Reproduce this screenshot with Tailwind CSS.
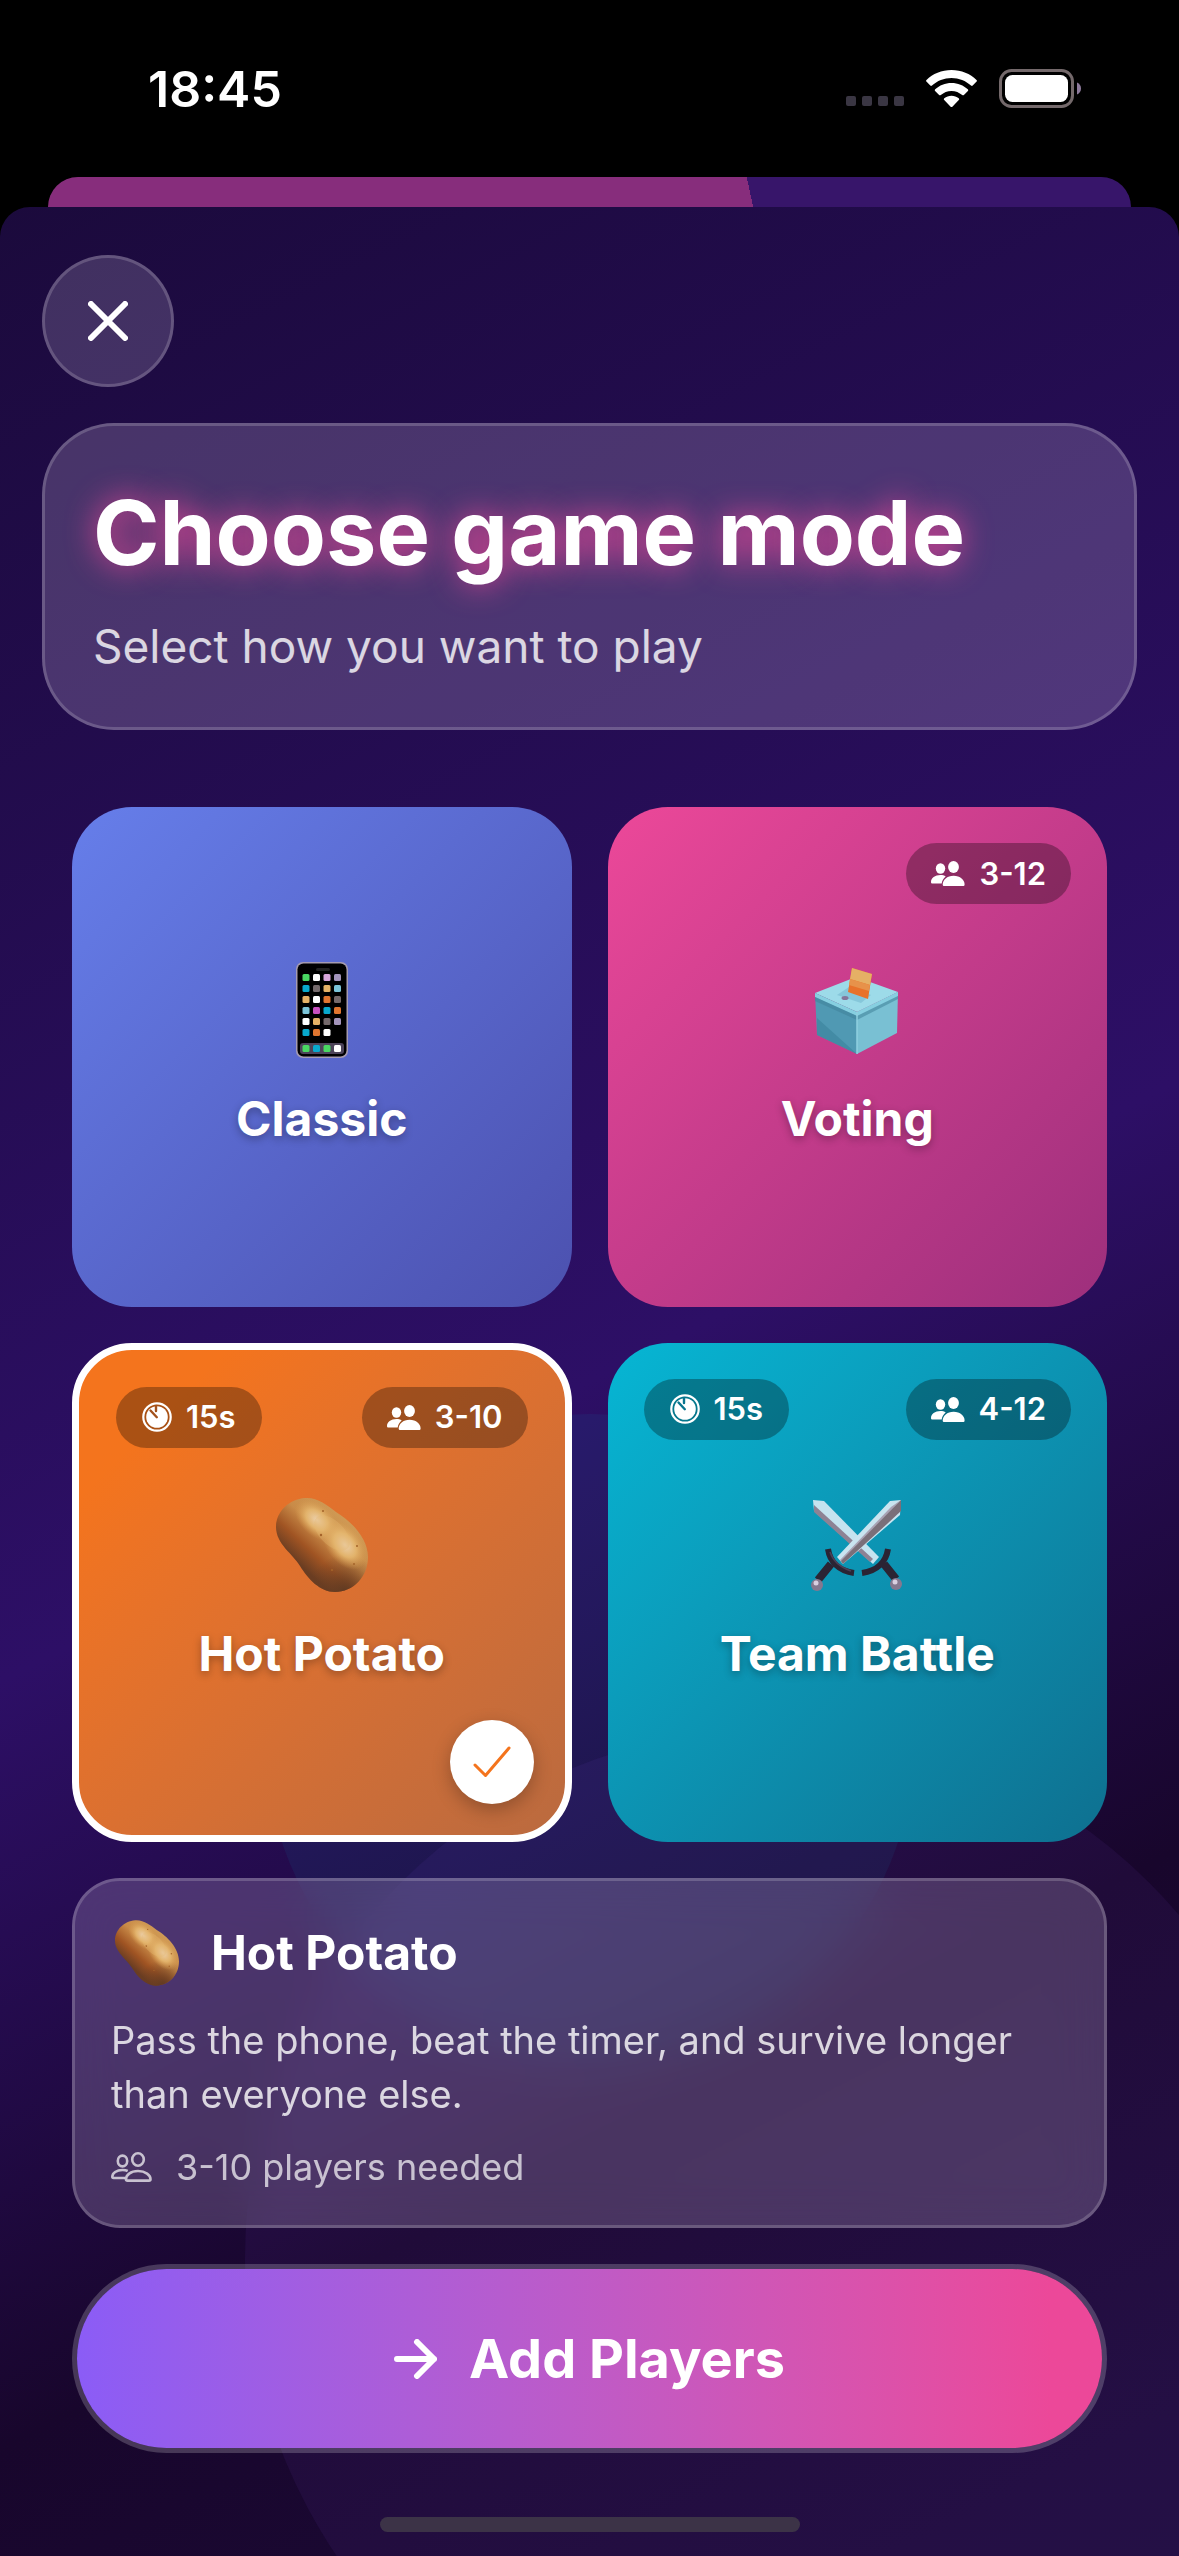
<!DOCTYPE html>
<html lang="en">
<head>
  <meta charset="UTF-8" />
  <meta name="viewport" content="width=device-width, initial-scale=1.0" />
  <title>Choose game mode</title>
  <script src="https://cdn.jsdelivr.net/npm/@tailwindcss/browser@4"></script>
</head>
<body class="flex min-h-screen flex-col bg-black font-['Inter','Liberation_Sans',sans-serif] text-white">

  <!-- Shared icons -->
  <svg class="absolute size-0" aria-hidden="true">
    <defs>
      <linearGradient id="skin" x1="0.75" y1="0.2" x2="0.25" y2="0.75">
        <stop offset="0" stop-color="#cf9a55" />
        <stop offset="0.4" stop-color="#c98b48" />
        <stop offset="0.7" stop-color="#a05423" />
        <stop offset="0.95" stop-color="#6a3d22" />
      </linearGradient>
      <radialGradient id="shine">
        <stop offset="0" stop-color="#ecd0ac" />
        <stop offset="0.5" stop-color="#e5b76f" stop-opacity="0.9" />
        <stop offset="1" stop-color="#d79a4e" stop-opacity="0" />
      </radialGradient>
      <radialGradient id="shade" cx="0.75" cy="1" r="0.4">
        <stop offset="0" stop-color="#5f3a22" />
        <stop offset="1" stop-color="#6a3d22" stop-opacity="0" />
      </radialGradient>
    </defs>
    <symbol id="people" viewBox="0 0 34 25">
      <ellipse cx="9.500" cy="7.500" rx="4.700" ry="5.200" />
      <path d="M1.500 22.500C.6 22.500 0 22 0 21c0-3.800 4-7 9.500-7 2 0 3.800.5 5.200 1.400-2.300 1.800-3.700 4.300-4 7.100z" />
      <ellipse cx="22.500" cy="6" rx="5.400" ry="6" />
      <path d="M13.500 25c-1.200 0-1.800-.6-1.800-1.600 0-4.300 4.300-8.700 10.900-8.700s11 4.400 11 8.700c0 1-.6 1.600-1.800 1.600z" />
    </symbol>
    <!-- the hand of the timer takes the text colour -->
    <symbol id="timer" viewBox="0 0 30 30">
      <circle cx="15" cy="15" r="13.700" fill="none" stroke="#fff" stroke-width="2.200" />
      <circle cx="15" cy="15" r="10.800" fill="#fff" />
      <path d="M8.500 8.500l6.300 6.700M14 4v5" fill="none" stroke="currentColor" stroke-width="2.400" stroke-linecap="round" />
    </symbol>
    <symbol id="potato" viewBox="0 0 92 94">
      <path fill="url(#skin)" d="M29 0c12-1 22 7 31 14 15 9 32 26 32 45 0 20-15 35-33 35-15 0-27-13-35-26C17 56 0 46 0 29 0 14 13 1 29 0z" />
      <path fill="url(#shade)" d="M29 0c12-1 22 7 31 14 15 9 32 26 32 45 0 20-15 35-33 35-15 0-27-13-35-26C17 56 0 46 0 29 0 14 13 1 29 0z" />
      <ellipse cx="41" cy="22" rx="26" ry="16" transform="rotate(42 41 22)" fill="url(#shine)" />
      <ellipse cx="69" cy="47" rx="28" ry="18" transform="rotate(52 69 47)" fill="url(#shine)" />
      <ellipse cx="56" cy="35" rx="22" ry="12" transform="rotate(45 56 35)" fill="#e5b76f" opacity=".35" />
      <g fill="#a5642a">
        <circle cx="47" cy="13" r="1" />
        <circle cx="45" cy="37" r="1.200" />
        <circle cx="78" cy="66" r="1" />
        <circle cx="81" cy="48" r="1" />
        <circle cx="56" cy="72" r="1" />
      </g>
    </symbol>
  </svg>

  <!-- Status bar -->
  <header class="flex h-[177px] items-center justify-between pr-[98px] pl-[148px]">
    <time class="text-[50px] leading-[60px] font-semibold">18:45</time>
    <div class="flex items-center gap-[22px]">
      <div class="flex gap-1.5 pt-6">
        <span class="size-2.5 rounded-xs bg-[#3a3643]"></span>
        <span class="size-2.5 rounded-xs bg-[#3a3643]"></span>
        <span class="size-2.5 rounded-xs bg-[#3a3643]"></span>
        <span class="size-2.5 rounded-xs bg-[#3a3643]"></span>
      </div>
      <svg class="h-[37px] w-[51px]" viewBox="0 0 51 37" fill="#fff" aria-label="Wi-Fi">
        <path d="M25.500 0C35.300 0 44.300 3.800 50.500 9.900c.6.600.6 1.100.1 1.700l-3.900 4c-.5.500-1.100.5-1.700 0C39.900 10.700 32.900 7.900 25.500 7.900S11.100 10.700 6 15.600c-.6.500-1.200.5-1.700 0l-3.900-4c-.5-.6-.5-1.100.1-1.700C6.700 3.800 15.700 0 25.500 0z" />
        <path d="M25.500 12.900c6.300 0 12 2.400 16.300 6.300.6.600.6 1.200.1 1.700l-4 4c-.5.500-1.100.5-1.700.1-2.900-2.500-6.600-4.100-10.700-4.100s-7.800 1.600-10.700 4.100c-.6.400-1.200.4-1.700-.1l-4-4c-.5-.5-.5-1.100.1-1.700 4.300-3.900 10-6.300 16.300-6.300z" />
        <path d="M25.500 25.700c2.700 0 5.200 1 7.200 2.600.6.600.6 1.100.1 1.700l-6.200 6.400c-.7.800-1.500.8-2.200 0L18.200 30c-.5-.6-.5-1.100.1-1.700 2-1.600 4.500-2.600 7.200-2.600z" />
      </svg>
      <svg class="h-[39px] w-[82px]" viewBox="0 0 82 39" aria-label="Battery">
        <rect x="1.500" y="1.500" width="72" height="36" rx="11" fill="none" stroke="#74696b" stroke-width="3" />
        <rect x="6" y="6" width="63" height="27" rx="7.500" fill="#fff" />
        <path d="M78 13.500c2.600 1 4 3.400 4 6s-1.400 5-4 6z" fill="#8d7a9b" />
      </svg>
    </div>
  </header>

  <!-- Sheet behind -->
  <div class="mx-12 -mb-10 h-[70px] rounded-t-[30px] bg-[linear-gradient(78deg,#872d7c_65%,#37156a_65%)]"></div>

  <!-- Game mode sheet -->
  <main class="relative isolate flex grow flex-col overflow-hidden rounded-t-[30px] bg-[linear-gradient(153deg,#1b0a3c_0%,#2d0f66_50%,#18062c_76%,#1d0b3a_100%)] px-[42px] pt-12 pb-6">
    <div class="absolute top-[1207px] left-[265px] -z-10 size-[650px] rounded-full bg-[#06b6d4]/7"></div>
    <div class="absolute top-[1521px] left-[245px] -z-10 size-[1060px] rounded-full bg-[#8b5cf6]/7"></div>

    <button type="button" aria-label="Close" class="grid size-[132px] place-items-center rounded-full border-[3px] border-white/18 bg-[#efddff]/18">
      <svg class="size-10" viewBox="0 0 40 40" fill="none" stroke="#fff" stroke-width="6" stroke-linecap="round" aria-hidden="true">
        <path d="M3 3l34 34M37 3L3 37" />
      </svg>
    </button>

    <section class="mt-9 rounded-[72px] border-[3px] border-white/18 bg-[#efddff]/20 px-12 py-[51px]">
      <h1 class="text-[90px] leading-[112px] font-bold [text-shadow:0_0_30px_#ec4899]">Choose game mode</h1>
      <p class="mt-7 text-[46px] leading-[59px] text-white/80">Select how you want to play</p>
    </section>

    <div class="mx-[30px] mt-[77px] grid grid-cols-2 gap-9 text-[48px] leading-[58px] font-bold">
      <button type="button" class="relative flex aspect-square flex-col items-center justify-center gap-8 rounded-[60px] bg-linear-135 from-[#667eea] to-[#4c51af] pb-1">
        <svg class="h-[96px] w-[52px]" viewBox="0 0 52 96" aria-hidden="true">
          <rect width="52" height="96" rx="7" fill="#a59bb0" />
          <rect x="1.500" y="1.500" width="49" height="93" rx="6" fill="#000" />
          <rect x="20" y="6" width="14" height="3" rx="1.500" fill="#222" />
          <rect x="4" y="81" width="44" height="11" rx="3" fill="#4c4358" />
          <g fill="#49d862"><rect x="6.500" y="12" width="7" height="7" rx="1.500" /><rect x="6.500" y="83" width="7" height="7" rx="1.500" /><rect x="27.500" y="83" width="7" height="7" rx="1.500" /></g>
          <g fill="#fff"><rect x="17" y="12" width="7" height="7" rx="1.500" /><rect x="17" y="34" width="7" height="7" rx="1.500" /><rect x="6.500" y="56" width="7" height="7" rx="1.500" /><rect x="27.500" y="67" width="7" height="7" rx="1.500" /><rect x="38" y="83" width="7" height="7" rx="1.500" /></g>
          <g fill="#08a9cd"><rect x="6.500" y="23" width="7" height="7" rx="1.500" /><rect x="27.500" y="45" width="7" height="7" rx="1.500" /><rect x="6.500" y="67" width="7" height="7" rx="1.500" /><rect x="17" y="83" width="7" height="7" rx="1.500" /></g>
          <g fill="#74696b"><rect x="17" y="23" width="7" height="7" rx="1.500" /><rect x="38" y="34" width="7" height="7" rx="1.500" /><rect x="27.500" y="56" width="7" height="7" rx="1.500" /></g>
          <g fill="#e5b267"><rect x="27.500" y="23" width="7" height="7" rx="1.500" /><rect x="6.500" y="34" width="7" height="7" rx="1.500" /><rect x="17" y="56" width="7" height="7" rx="1.500" /></g>
          <g fill="#7cc4d8"><rect x="38" y="23" width="7" height="7" rx="1.500" /><rect x="6.500" y="45" width="7" height="7" rx="1.500" /></g>
          <g fill="#a394bb"><rect x="38" y="12" width="7" height="7" rx="1.500" /><rect x="38" y="56" width="7" height="7" rx="1.500" /></g>
          <g fill="#e0752f"><rect x="27.500" y="34" width="7" height="7" rx="1.500" /><rect x="38" y="45" width="7" height="7" rx="1.500" /><rect x="17" y="67" width="7" height="7" rx="1.500" /></g>
          <rect x="27.500" y="12" width="7" height="7" rx="1.500" fill="#d9a6dc" />
          <rect x="17" y="45" width="7" height="7" rx="1.500" fill="#c850c0" />
        </svg>
        <span class="[text-shadow:0_3px_9px_#0000004d]">Classic</span>
      </button>

      <button type="button" class="relative flex aspect-square flex-col items-center justify-center gap-8 rounded-[60px] bg-linear-135 from-[#ec4899] to-[#9d2f7c] pb-1">
        <span class="absolute top-9 right-9 flex h-[61px] items-center gap-3.5 rounded-full bg-black/30 px-[25px] text-[31px] font-semibold">
          <svg class="h-[25px] w-[34px]" fill="#fff" aria-hidden="true"><use href="#people" /></svg>
          3-12
        </span>
        <svg class="h-[96px] w-[84px]" viewBox="0 4 84 96" aria-hidden="true">
          <path d="M0 35L41 19l42 15-41 20z" fill="#9ddbe9" />
          <path d="M0 35l42 19v42L2 77z" fill="#5099b3" />
          <path d="M42 54l41-20-1 41-40 21z" fill="#79c0d3" />
          <path d="M2 60l40 36L2 77z" fill="#3b829b" opacity=".6" />
          <path d="M0 35l42 19 41-20v4L42 58 0 39z" fill="#86cfe0" />
          <path d="M0 39l42 19 41-20v3L42 62 0 43z" fill="#3f8299" opacity=".55" />
          <path d="M42 54v42" stroke="#8fd0e0" stroke-width="1.500" />
          <path d="M22 37l12-8 22 8-10 8z" fill="#6fb3cb" opacity=".5" />
          <ellipse cx="30" cy="40" rx="3.500" ry="2" fill="#85759a" />
          <path d="M37 10l20 6-4 25-20-7z" fill="#e8722a" />
          <path d="M37 10l20 6-2 11-20-6z" fill="#e5b065" />
          <path d="M35 21l20 6-1 6-20-6z" fill="#e7924a" />
        </svg>
        <span class="[text-shadow:0_3px_9px_#0000004d]">Voting</span>
      </button>

      <button type="button" aria-pressed="true" class="relative flex aspect-square flex-col items-center justify-center gap-8 rounded-[60px] border-[7px] border-white bg-linear-135 from-[#f4741d] from-15% to-[#ba6a3f] pb-1">
        <span class="absolute top-[37px] left-[37px] flex h-[61px] items-center gap-3.5 rounded-full bg-black/30 px-[26px] text-[31px] font-semibold">
          <svg class="size-[30px] text-[#a3521d]" aria-hidden="true"><use href="#timer" /></svg>
          15s
        </span>
        <span class="absolute top-[37px] right-[37px] flex h-[61px] items-center gap-3.5 rounded-full bg-black/30 px-[25px] text-[31px] font-semibold">
          <svg class="h-[25px] w-[34px]" fill="#fff" aria-hidden="true"><use href="#people" /></svg>
          3-10
        </span>
        <svg class="h-[96px] w-[92px]" aria-hidden="true"><use href="#potato" /></svg>
        <span class="[text-shadow:0_3px_9px_#0000004d]">Hot Potato</span>
        <span class="absolute right-[31px] bottom-[31px] grid size-[84px] place-items-center rounded-full bg-white shadow-[0_6px_18px_#00000040]">
          <svg class="h-[32px] w-[38px]" viewBox="0 0 38 32" fill="none" stroke="#f4741d" stroke-width="3" stroke-linecap="round" stroke-linejoin="round" aria-hidden="true">
            <path d="M2 19l10.500 10.500L36 2" />
          </svg>
        </span>
      </button>

      <button type="button" class="relative flex aspect-square flex-col items-center justify-center gap-8 rounded-[60px] bg-linear-135 from-[#06b6d4] to-[#0e7090] pb-1">
        <span class="absolute top-9 left-9 flex h-[61px] items-center gap-3.5 rounded-full bg-black/30 px-[26px] text-[31px] font-semibold">
          <svg class="size-[30px] text-[#08758f]" aria-hidden="true"><use href="#timer" /></svg>
          15s
        </span>
        <span class="absolute top-9 right-9 flex h-[61px] items-center gap-3.5 rounded-full bg-black/30 px-[25px] text-[31px] font-semibold">
          <svg class="h-[25px] w-[34px]" fill="#fff" aria-hidden="true"><use href="#people" /></svg>
          4-12
        </span>
        <svg class="h-[96px] w-[92px]" viewBox="0 0 92 96" aria-hidden="true">
          <path d="M2 3l11 1 55 56-6 7L3 14z" fill="#c5e3ef" />
          <path d="M3 8l59 54-3 3L3 15z" fill="#8d8294" />
          <path d="M90 3l-11 1-53 56 6 7 57-49z" fill="#c9e4f0" />
          <path d="M90 3L31 66l-2-3L80 10z" fill="#a9a2b4" />
          <path d="M90 3v11l-14 13-44 40-2-3z" fill="#7a6f79" />
          <path d="M73 67l12 15M20 67L7 83" stroke="#2b2433" stroke-width="8" />
          <path d="M17 52c2 13 11 22 26 24M77 52c-2 13-11 22-26 24" fill="none" stroke="#2b2433" stroke-width="6" />
          <path d="M19 55c3 9 9 15 21 19" fill="none" stroke="#4a4057" stroke-width="1.500" />
          <circle cx="6" cy="88" r="6" fill="#85788f" />
          <circle cx="85" cy="87" r="6" fill="#85788f" />
          <circle cx="5" cy="86" r="2.500" fill="#d8cfe0" />
          <circle cx="84" cy="85" r="2.500" fill="#d8cfe0" />
        </svg>
        <span class="[text-shadow:0_3px_9px_#0000004d]">Team Battle</span>
      </button>
    </div>

    <section class="mx-[30px] mt-9 rounded-[48px] border-[3px] border-white/18 bg-[#efddff]/20 p-9 backdrop-blur-xl">
      <div class="flex items-center gap-8 pl-1">
        <svg class="h-[72px] w-[64px]" aria-hidden="true"><use href="#potato" /></svg>
        <h2 class="text-[48px] leading-[58px] font-bold">Hot Potato</h2>
      </div>
      <p class="mt-6 text-[38px] leading-[54px] text-white/80">Pass the phone, beat the timer, and survive longer than everyone else.</p>
      <p class="mt-6 flex items-center gap-6 text-[36px] leading-[44px] text-white/70">
        <svg class="h-[30px] w-[41px]" viewBox="0 0 41 30" fill="none" stroke="currentColor" stroke-width="2.600" stroke-linejoin="round" aria-hidden="true">
          <ellipse cx="11.500" cy="9" rx="4.700" ry="5.400" />
          <ellipse cx="27" cy="7.500" rx="5.800" ry="6.200" />
          <path d="M14 26H2.500c-.9 0-1.200-.5-1.200-1.300C1.300 21 5.500 18 11.500 18c2 0 3.800.3 5.200 1" />
          <path d="M16.500 28.600c-1 0-1.500-.5-1.500-1.400 0-4 4.500-8.200 12-8.200s12.500 4.200 12.500 8.200c0 .9-.5 1.400-1.500 1.400z" />
        </svg>
        3-10 players needed
      </p>
    </section>

    <button type="button" class="mx-[30px] mt-9 flex h-[189px] items-center justify-center gap-8 rounded-full border-[5px] border-white/20 bg-linear-to-r from-[#8b5cf6] to-[#ec4899] to-95% bg-clip-padding text-[54px] leading-[64px] font-bold">
      <svg class="h-[40px] w-[43px]" viewBox="0 0 43 40" fill="none" stroke="#fff" stroke-width="6" stroke-linecap="round" stroke-linejoin="round" aria-hidden="true">
        <path d="M3 20h37M23 3l17 17-17 17" />
      </svg>
      Add Players
    </button>

    <div class="mx-auto mt-auto h-[15px] w-[420px] rounded-full bg-[#3c3347]"></div>
  </main>
</body>
</html>
